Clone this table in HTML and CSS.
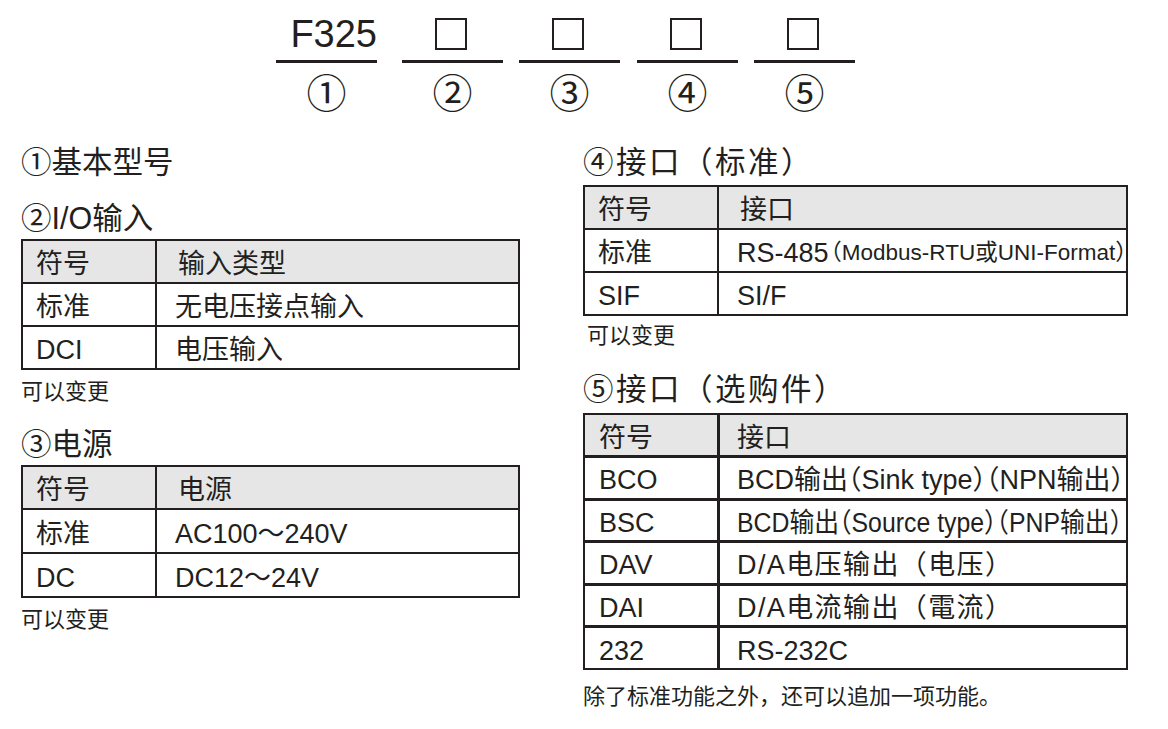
FILE: index.html
```html
<!DOCTYPE html>
<html lang="zh-CN">
<head>
<meta charset="utf-8">
<title>F325 型号构成</title>
<link rel="stylesheet" href="styles.css">
</head>
<body>
<header class="model">
  <div class="seg seg-first">
    <div class="code"><span class="base">F325</span></div>
    <div class="rule"></div>
    <div class="num">①</div>
  </div>
  <div class="seg seg-2">
    <div class="code"><span class="box"></span></div>
    <div class="rule"></div>
    <div class="num">②</div>
  </div>
  <div class="seg">
    <div class="code"><span class="box"></span></div>
    <div class="rule"></div>
    <div class="num">③</div>
  </div>
  <div class="seg seg-4">
    <div class="code"><span class="box"></span></div>
    <div class="rule"></div>
    <div class="num">④</div>
  </div>
  <div class="seg">
    <div class="code"><span class="box"></span></div>
    <div class="rule"></div>
    <div class="num">⑤</div>
  </div>
</header>

<main class="cols">
  <section class="col col-left">
    <h2 class="sec">①基本型号</h2>
    <h2 class="sec sec-2">②I/O输入</h2>
    <div class="tbl t1">
      <div class="row head"><div class="c1">符号</div><div class="c2">输入类型</div></div>
      <div class="row"><div class="c1">标准</div><div class="c2">无电压接点输入</div></div>
      <div class="row"><div class="c1">DCI</div><div class="c2">电压输入</div></div>
    </div>
    <p class="note">可以变更</p>
    <h2 class="sec sec-3">③电源</h2>
    <div class="tbl t2">
      <div class="row head"><div class="c1">符号</div><div class="c2">电源</div></div>
      <div class="row"><div class="c1">标准</div><div class="c2">AC100～240V</div></div>
      <div class="row"><div class="c1">DC</div><div class="c2">DC12～24V</div></div>
    </div>
    <p class="note">可以变更</p>
  </section>

  <section class="col col-right">
    <h2 class="sec wide">④接口（标准）</h2>
    <div class="tbl t3">
      <div class="row head"><div class="c1">符号</div><div class="c2">接口</div></div>
      <div class="row"><div class="c1">标准</div><div class="c2">RS-485<span class="small">（Modbus-RTU或UNI-Format）</span></div></div>
      <div class="row"><div class="c1">SIF</div><div class="c2">SI/F</div></div>
    </div>
    <p class="note note-indent">可以变更</p>
    <h2 class="sec sec-5 wide">⑤接口（选购件）</h2>
    <div class="tbl t4">
      <div class="row head"><div class="c1">符号</div><div class="c2">接口</div></div>
      <div class="row"><div class="c1">BCO</div><div class="c2 half">BCD输出（Sink type）（NPN输出）</div></div>
      <div class="row"><div class="c1">BSC</div><div class="c2 half"><span class="narrow">BCD输出（Source type）（PNP输出）</span></div></div>
      <div class="row"><div class="c1">DAV</div><div class="c2 spaced">D/A电压输出（电压）</div></div>
      <div class="row"><div class="c1">DAI</div><div class="c2 spaced">D/A电流输出（電流）</div></div>
      <div class="row"><div class="c1">232</div><div class="c2">RS-232C</div></div>
    </div>
    <p class="note note-last">除了标准功能之外，还可以追加一项功能。</p>
  </section>
</main>
</body>
</html>
```

FILE: styles.css
```css
* { box-sizing: border-box; }

html, body {
  margin: 0;
  padding: 0;
  background: #ffffff;
}

body {
  width: 1168px;
  height: 729px;
  overflow: hidden;
  color: #231f20;
  font-family: "Liberation Sans", "Noto Sans CJK SC", sans-serif;
  text-spacing-trim: space-all;
}

/* ---------- model code header ---------- */
.model {
  display: flex;
  gap: 16px;
  margin-left: 276px;
}

.seg {
  width: 101px;
  display: flex;
  flex-direction: column;
  align-items: center;
}

.seg-2 { margin-left: 9px; }
.seg-4 { margin-left: 1px; }

.code {
  height: 60px;
  width: 100%;
  display: flex;
  align-items: flex-end;
  justify-content: center;
}

.seg-first .code { justify-content: flex-end; }

.base {
  font-size: 38px;
  line-height: 38px;
  margin-bottom: 7px;
}

.box {
  display: block;
  width: 32px;
  height: 32px;
  border: 2px solid #231f20;
  margin-bottom: 10px;
  margin-left: -4px;
}

.rule {
  width: 100%;
  height: 3px;
  background: #231f20;
}

.num {
  font-family: "Noto Sans CJK SC", sans-serif;
  font-size: 40px;
  line-height: 40px;
  margin-top: 8px;
}

/* ---------- columns ---------- */
.cols {
  display: grid;
  grid-template-columns: 499px 545px;
  column-gap: 63px;
  padding-left: 21px;
  margin-top: 33px;
}

.col {
  display: flex;
  flex-direction: column;
  align-items: stretch;
}

.sec {
  margin: 0;
  font-weight: normal;
  font-size: 30.5px;
  line-height: 36px;
  height: 36px;
  white-space: nowrap;
}

.sec.wide { letter-spacing: 2.5px; }

.sec-2 { margin-top: 20px; margin-bottom: 3px; }
.sec-3 { margin-top: 21px; margin-bottom: 3px; }
.col-right .sec { margin-bottom: 5px; }
.col-right .sec-5 { margin-top: 22px; margin-bottom: 6px; }

.note {
  margin: 9px 0 0;
  font-size: 22px;
  line-height: 26px;
  height: 26px;
}

.t2 + .note { margin-top: 9px; }
.note-indent { padding-left: 4px; margin-top: 7px; }
.note-last { margin-top: 14px; }

/* ---------- tables ---------- */
.tbl {
  border: 2px solid #231f20;
  font-size: 27px;
}

.row {
  display: grid;
  grid-template-columns: 132px 1fr;
  height: 43px;
  border-top: 2px solid #231f20;
}

.row:first-child {
  border-top: none;
  height: 41px;
}

.row.head { background: #e6e6e6; }

.c1, .c2 {
  display: flex;
  align-items: center;
  white-space: nowrap;
  line-height: 1;
  padding-top: 6px;
}

.c1 { padding-left: 13px; }

.c2 {
  padding-left: 18px;
  border-left: 2px solid #231f20;
}

.head .c2 { padding-left: 21px; }

.t2 .row { height: 44px; }
.t2 .row:first-child { height: 41px; }

.small {
  font-size: 22.5px;
  font-feature-settings: "halt";
  margin-left: 2px;
}

.half { font-feature-settings: "halt"; }

.spaced { letter-spacing: 1.4px; }

.narrow {
  display: inline-block;
  transform: scaleX(0.92);
  transform-origin: left center;
}

.t4 .row {
  height: 42.6px;
  border-top-width: 3px;
}

.t4 .row:first-child {
  height: 40px;
  border-top: none;
}

.t4 .c2 { border-left-width: 3px; }
.t4 .c1 { padding-left: 14px; }
.t4 .c2 { padding-left: 17px; }
```
